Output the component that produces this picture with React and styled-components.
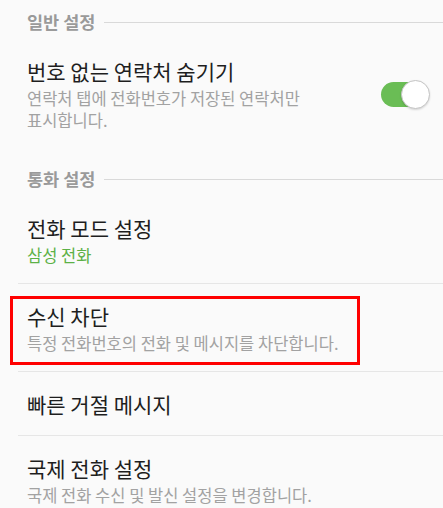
import styled, { createGlobalStyle } from "styled-components";

const GlobalStyle = createGlobalStyle`
  html, body {
    margin: 0;
    padding: 0;
    background: #fafafa;
  }
  body {
    font-family: "Noto Sans CJK KR", "Noto Sans", sans-serif;
  }
`;

const Screen = styled.div`
  width: 443px;
  height: 508px;
  overflow: hidden;
  background: #fafafa;
`;

const Section = styled.section``;

const SectionHeader = styled.div`
  display: flex;
  align-items: center;
  gap: 9px;
  padding: 12px 0 7px 27px;
  height: 20px;
  font-size: 17.5px;
  font-weight: 700;
  color: #9a9a9a;
  line-height: 20px;

  &::after {
    content: "";
    flex: 1;
    height: 1px;
    background: #d9d9d9;
  }
`;

const Row = styled.div`
  position: relative;
  display: flex;
  align-items: center;
  justify-content: space-between;
  margin-left: 18px;
  padding: 18px 13px ${(p) => (p.$tall ? "26px" : "17px")} 9px;
  border-top: ${(p) => (p.$divider ? "1px solid #e6e6e6" : "none")};

  ${(p) =>
    p.$highlight &&
    `
    &::after {
      content: "";
      position: absolute;
      left: -8px;
      top: 12px;
      width: 350px;
      height: 69px;
      box-sizing: border-box;
      border: 3px solid #ff0000;
      pointer-events: none;
    }
  `}
`;

const RowText = styled.div`
  flex: 0 1 320px;
  min-width: 0;
  display: flex;
  flex-direction: column;
  word-break: keep-all;
`;

const Title = styled.div`
  font-size: 21px;
  line-height: 28px;
  color: #1e1e1e;
  white-space: nowrap;
`;

const Subtitle = styled.div`
  margin-top: 2px;
  font-size: 16.5px;
  line-height: 22px;
  color: ${(p) => (p.$accent ? "#5cb146" : "#a2a2a2")};
`;

const Track = styled.div`
  position: relative;
  flex: none;
  width: 43px;
  height: 25px;
  border-radius: 13px;
  background: #6abd55;
  margin-right: 6px;
`;

const Thumb = styled.div`
  position: absolute;
  right: -6px;
  top: -2px;
  width: 27px;
  height: 27px;
  border-radius: 50%;
  background: #ffffff;
  border: 1px solid #c4c4c4;
  box-shadow: 0 1px 2px rgba(0, 0, 0, 0.15);
`;

const Switch = () => (
  <Track>
    <Thumb />
  </Track>
);

export default function App() {
  return (
    <Screen>
      <GlobalStyle />
      <Section>
        <SectionHeader>일반 설정</SectionHeader>
        <Row $tall>
          <RowText>
            <Title>번호 없는 연락처 숨기기</Title>
            <Subtitle>연락처 탭에 전화번호가 저장된 연락처만 표시합니다.</Subtitle>
          </RowText>
          <Switch />
        </Row>
      </Section>

      <Section>
        <SectionHeader>통화 설정</SectionHeader>
        <Row>
          <RowText>
            <Title>전화 모드 설정</Title>
            <Subtitle $accent>삼성 전화</Subtitle>
          </RowText>
        </Row>
        <Row $divider $highlight>
          <RowText>
            <Title>수신 차단</Title>
            <Subtitle>특정 전화번호의 전화 및 메시지를 차단합니다.</Subtitle>
          </RowText>
        </Row>
        <Row $divider>
          <RowText>
            <Title>빠른 거절 메시지</Title>
          </RowText>
        </Row>
        <Row $divider>
          <RowText>
            <Title>국제 전화 설정</Title>
            <Subtitle>국제 전화 수신 및 발신 설정을 변경합니다.</Subtitle>
          </RowText>
        </Row>
      </Section>
    </Screen>
  );
}
